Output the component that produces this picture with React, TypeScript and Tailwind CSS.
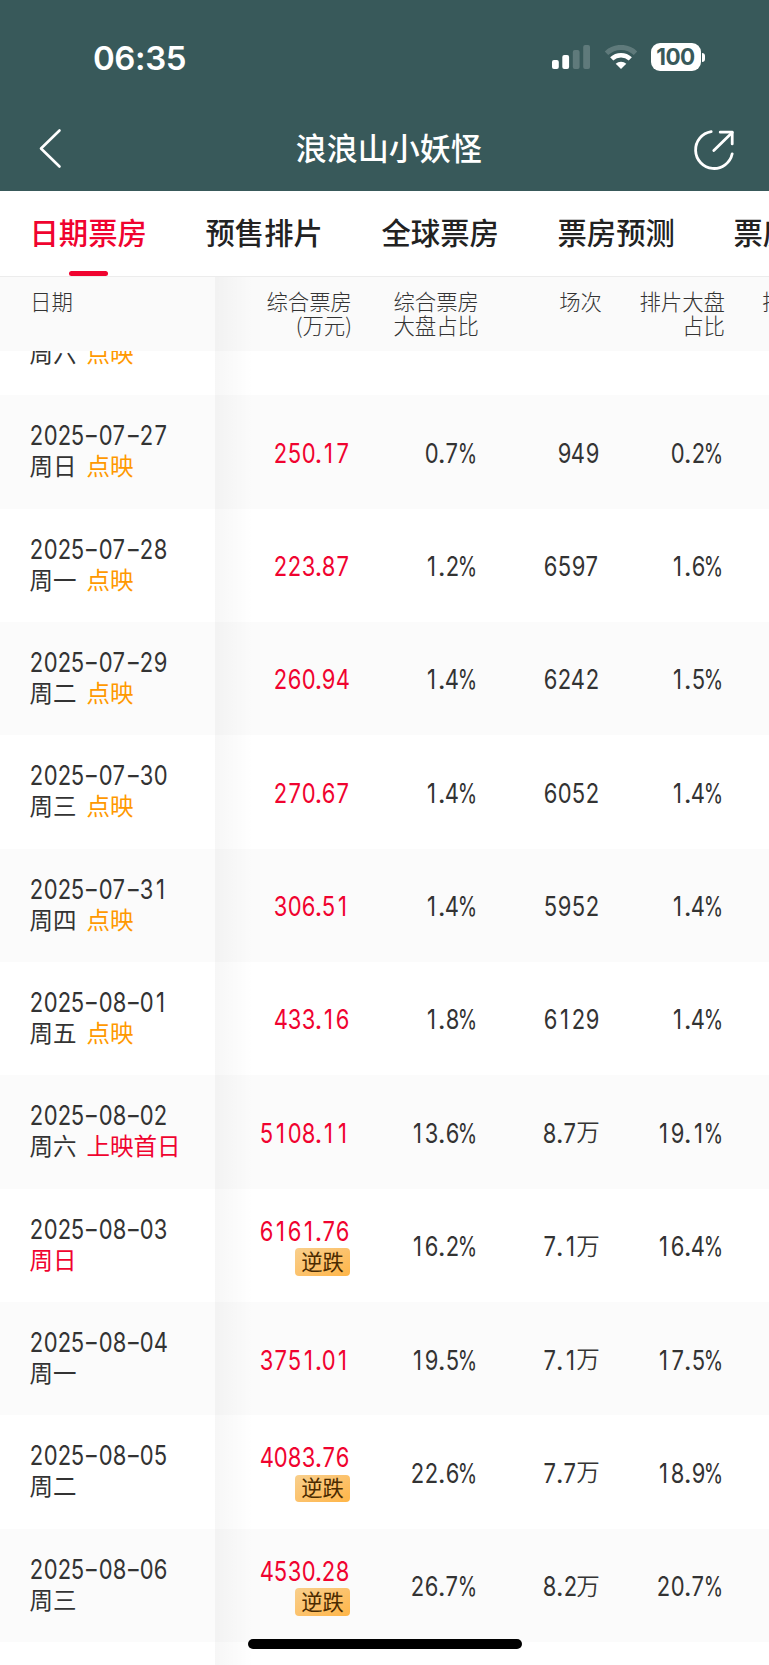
import { clsx } from "clsx";

interface Row {
  date: string;
  week: string;
  weekRed?: boolean;
  tag?: string;
  tagRed?: boolean;
  box: string;
  share: string;
  shows: string;
  showShare: string;
  drop?: boolean;
}

const tabs = ["日期票房", "预售排片", "全球票房", "票房预测", "票房"];

const rows: Row[] = [
  { date: "", week: "周六", tag: "点映", box: "", share: "", shows: "", showShare: "" },
  { date: "2025-07-27", week: "周日", tag: "点映", box: "250.17", share: "0.7%", shows: "949", showShare: "0.2%" },
  { date: "2025-07-28", week: "周一", tag: "点映", box: "223.87", share: "1.2%", shows: "6597", showShare: "1.6%" },
  { date: "2025-07-29", week: "周二", tag: "点映", box: "260.94", share: "1.4%", shows: "6242", showShare: "1.5%" },
  { date: "2025-07-30", week: "周三", tag: "点映", box: "270.67", share: "1.4%", shows: "6052", showShare: "1.4%" },
  { date: "2025-07-31", week: "周四", tag: "点映", box: "306.51", share: "1.4%", shows: "5952", showShare: "1.4%" },
  { date: "2025-08-01", week: "周五", tag: "点映", box: "433.16", share: "1.8%", shows: "6129", showShare: "1.4%" },
  { date: "2025-08-02", week: "周六", tag: "上映首日", tagRed: true, box: "5108.11", share: "13.6%", shows: "8.7万", showShare: "19.1%" },
  { date: "2025-08-03", week: "周日", weekRed: true, box: "6161.76", share: "16.2%", shows: "7.1万", showShare: "16.4%", drop: true },
  { date: "2025-08-04", week: "周一", box: "3751.01", share: "19.5%", shows: "7.1万", showShare: "17.5%" },
  { date: "2025-08-05", week: "周二", box: "4083.76", share: "22.6%", shows: "7.7万", showShare: "18.9%", drop: true },
  { date: "2025-08-06", week: "周三", box: "4530.28", share: "26.7%", shows: "8.2万", showShare: "20.7%", drop: true },
];

// narrow figures, every digit takes the same 13.8px
function Figures({ text }: { text: string }) {
  return (
    <span className="inline-flex h-7 items-center font-['Inter',sans-serif] text-[27.5px] leading-7 font-[425]">
      {text.split("").map((c, i) => (
        <span
          key={i}
          className={clsx(
            "flex justify-center",
            c === "." && "w-[6.8px]",
            c === "%" && "w-[17.5px]",
            c === "万" && "mb-[3px] w-[22px] font-['Noto_Sans_CJK_SC',sans-serif] text-[23.5px] font-[350]",
            !".%万".includes(c) && "w-[13.8px]",
          )}
        >
          <span
            className={clsx(
              "shrink-0",
              c === "-" && "scale-x-[1.2]",
              c === "%" && "scale-x-[0.72]",
              /\d/.test(c) && "scale-x-[0.8]",
            )}
          >
            {c}
          </span>
        </span>
      ))}
    </span>
  );
}

function StatusBar() {
  return (
    <div className="flex h-[108px] items-center justify-between pr-[64.5px] pl-[93px]">
      <span className="pt-[8px] font-['Inter',sans-serif] text-[33px] leading-none font-semibold tracking-[-0.4px]">
        06:35
      </span>
      <div className="flex items-center pt-[6px]">
        <svg className="h-6 w-[38px]" viewBox="0 0 38 24" fill="currentColor">
          <rect x="0" y="15" width="6.8" height="9" rx="2" />
          <rect x="10.3" y="10" width="6.8" height="14" rx="2" />
          <rect x="20.8" y="5" width="6.8" height="19" rx="2" opacity="0.2" />
          <rect x="31.2" y="0" width="6.8" height="24" rx="2" opacity="0.2" />
        </svg>
        <svg className="ml-[14px] h-6 w-[34px]" viewBox="0 0 34 24" fill="none" stroke="currentColor">
          <path d="M2.5 8.2a21 21 0 0 1 29 0" strokeWidth="5" opacity="0.2" />
          <path d="M7.7 13.9a13.6 13.6 0 0 1 18.6 0" strokeWidth="4.6" />
          <path d="M17 24l-5.3-5.2a7.6 7.6 0 0 1 10.6 0z" fill="currentColor" stroke="none" />
        </svg>
        <div className="ml-[13px] flex h-[28px] w-[50px] items-center justify-center rounded-[9px] bg-white font-['Inter',sans-serif] text-[22.5px] leading-none font-bold tracking-[-0.5px] text-[#38595a]">
          100
        </div>
        <div className="ml-[1px] h-[9px] w-[3px] rounded-r-full bg-white" />
      </div>
    </div>
  );
}

function NavBar() {
  return (
    <div className="flex h-[83px] items-center justify-between pr-[33.5px] pl-[38px]">
      <svg
        className="mb-[4px] h-[42px] w-[26px]"
        viewBox="0 0 26 42"
        fill="none"
        stroke="currentColor"
        strokeWidth="2.6"
        strokeLinecap="round"
        strokeLinejoin="round"
      >
        <path d="M21.5 3.5L3 21.5L21.5 39.5" />
      </svg>
      <h1 className="mb-[6px] ml-[22px] text-[31px] leading-10 font-medium">浪浪山小妖怪</h1>
      <svg
        className="h-[44px] w-[44px]"
        viewBox="0 0 44 44"
        fill="none"
        stroke="currentColor"
        strokeWidth="2.8"
        strokeLinecap="round"
        strokeLinejoin="round"
      >
        <path d="M19.2 3.7a18.5 18.5 0 1 0 21 22.1" />
        <path d="M21.8 22.5L40.2 4.5" />
        <path d="M28.2 4.2h12v11.7" />
      </svg>
    </div>
  );
}

function Tabs() {
  return (
    <div className="flex h-[86px] gap-[58.7px] overflow-hidden border-b border-[#ececec] bg-white pl-[29.5px]">
      {tabs.map((t, i) => (
        <div key={i} className="flex shrink-0 flex-col items-center">
          <span
            className={clsx(
              "pt-[20px] text-[29.33px] leading-10 font-medium",
              i === 0 ? "text-[#f0032f]" : "text-[#222]",
            )}
          >
            {t}
          </span>
          {i === 0 && <span className="mt-[20px] h-[6px] w-[39px] rounded-[3px] bg-[#f0032f]" />}
        </div>
      ))}
    </div>
  );
}

function TableHead() {
  const cell = "shrink-0 text-right whitespace-nowrap";
  return (
    <div className="flex h-[73.5px] bg-[#fafafa] pt-[12px] text-[21.4px] leading-[23.5px] font-light text-[#333]">
      <div className="w-[215px] shrink-0 pl-[30px]">日期</div>
      <div className={clsx(cell, "w-[137px]")}>
        综合票房
        <br />
        (万元)
      </div>
      <div className={clsx(cell, "w-[127px]")}>
        综合票房
        <br />
        大盘占比
      </div>
      <div className={clsx(cell, "w-[123px]")}>场次</div>
      <div className={clsx(cell, "w-[123px]")}>
        排片大盘
        <br />
        占比
      </div>
      <div className="shrink-0 pl-[37px]">排</div>
    </div>
  );
}

function TableRow({ row, index }: { row: Row; index: number }) {
  return (
    <div
      className={clsx(
        "flex h-[113.35px] shrink-0 text-[#333]",
        index % 2 === 1 ? "bg-[#fbfbfb]" : "bg-white",
      )}
    >
      <div className="flex w-[215px] shrink-0 flex-col pt-[26px] pl-[29.5px]">
        <Figures text={row.date} />
        <div className="-mt-px flex gap-[10px] text-[23.5px] leading-[34px]">
          <span className={clsx(row.weekRed && "text-[#f0032f]")}>{row.week}</span>
          <span className={row.tagRed ? "text-[#f0032f]" : "text-[#ff9900]"}>{row.tag}</span>
        </div>
      </div>
      <div className="flex w-[134.5px] shrink-0 flex-col items-end justify-center pt-[1.5px] text-[#f0032f]">
        <Figures text={row.box} />
        {row.drop && (
          <span className="mt-[3.5px] -mr-[0.5px] flex h-[27.5px] w-[55px] items-center justify-center rounded bg-linear-to-br from-[#f8cf8c] to-[#ffb545] pb-[3px] text-[21.3px] leading-none text-[#4a2b00]">
            逆跌
          </span>
        )}
      </div>
      <div className="flex w-[127px] shrink-0 items-center justify-end pt-[1.5px]">
        <Figures text={row.share} />
      </div>
      <div className="flex w-[122.5px] shrink-0 items-center justify-end pt-[1.5px]">
        <Figures text={row.shows} />
      </div>
      <div className="flex w-[123.5px] shrink-0 items-center justify-end pt-[1.5px]">
        <Figures text={row.showShare} />
      </div>
    </div>
  );
}

export default function App() {
  return (
    <div className="relative flex h-[1665px] w-[769px] flex-col overflow-hidden bg-white font-['Noto_Sans_CJK_SC',sans-serif]">
      <header className="bg-[#38595a] text-white">
        <StatusBar />
        <NavBar />
      </header>
      <Tabs />
      <TableHead />
      <div className="flex grow flex-col overflow-hidden">
        <div className="-mt-[68.5px] flex flex-col">
          {rows.map((row, i) => (
            <TableRow key={i} row={row} index={i} />
          ))}
        </div>
      </div>
      {/* edge shadow of the pinned date column */}
      <div className="absolute top-[277px] bottom-0 left-[215px] w-[38px] bg-linear-to-r from-black/[0.034] to-transparent" />
      {/* home indicator */}
      <div className="absolute bottom-[16px] left-[247.5px] h-[10px] w-[274px] rounded-full bg-black" />
    </div>
  );
}
